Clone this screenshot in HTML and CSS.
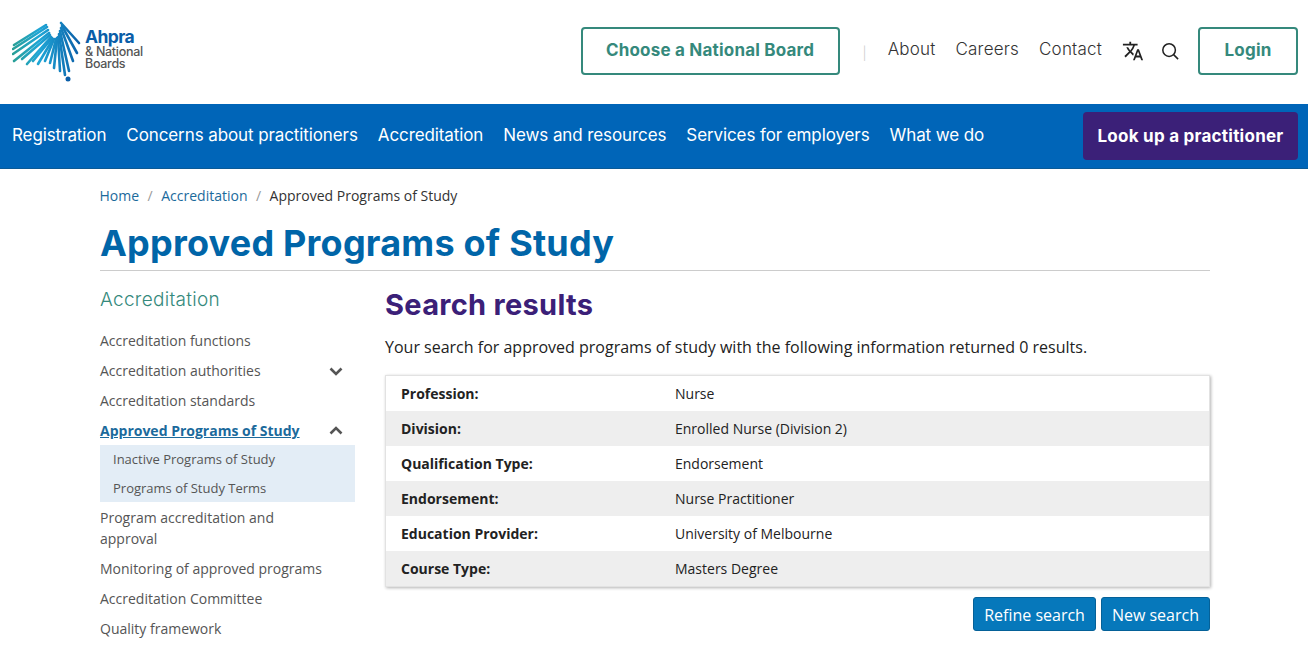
FILE: index.html
```html
<!DOCTYPE html>
<html lang="en">
<head>
    <meta charset="UTF-8">
    <meta name="viewport" content="width=device-width, initial-scale=1.0">
    <title>Approved Programs of Study</title>
    <link rel="stylesheet" href="styles.css">
</head>
<body>
    <header class="top">
        <a class="logo" href="#">
            <svg class="logo-mark" width="70" height="64" viewBox="12 20 70 64" fill="none" stroke-width="2.6" stroke-linecap="round">
                <defs>
                    <linearGradient id="fan" gradientUnits="userSpaceOnUse" x1="12" y1="0" x2="80" y2="0">
                        <stop offset="0" stop-color="#2a9f94"/>
                        <stop offset="0.4" stop-color="#1fa6d6"/>
                        <stop offset="1" stop-color="#0a5ea8"/>
                    </linearGradient>
                </defs>
                <g stroke="url(#fan)">
                    <path d="M14 44 L46 24"/>
                    <path d="M13 48 L47 26"/>
                    <path d="M13 53 L48 29"/>
                    <path d="M14 60 L49 32"/>
                    <path d="M22 58 L50 34"/>
                    <path d="M27 63 L51 36"/>
                    <path d="M33 60 L52 37"/>
                    <path d="M38 63 L53 38"/>
                    <path d="M45 60 L54 38"/>
                    <path d="M50 62 L56 38"/>
                    <path d="M54 67 L57 37"/>
                    <path d="M60 70 L58 36"/>
                    <path d="M65 74 L59 33"/>
                    <path d="M69 70 L60 30"/>
                    <path d="M73 60 L61 27"/>
                    <path d="M77 52 L62 25"/>
                    <path d="M79 42 L61 22"/>
                </g>
                <circle cx="68" cy="78" r="2.5" fill="#0a5ea8"/>
            </svg>
            <span class="logo-text">
                <strong>Ahpra</strong>
                <span>&amp; National</span>
                <span>Boards</span>
            </span>
        </a>
        <div class="top-links">
            <a class="btn-outline board" href="#">Choose a National Board</a>
            <span class="sep">|</span>
            <a class="plain" href="#">About</a>
            <a class="plain" href="#">Careers</a>
            <a class="plain" href="#">Contact</a>
            <svg class="translate" width="22" height="22" viewBox="0 0 24 24" fill="#222"><path d="M12.87 15.07l-2.54-2.51.03-.03A17.52 17.52 0 0 0 14.07 6H17V4h-7V2H8v2H1v2h11.17C11.5 7.92 10.44 9.75 9 11.35 8.07 10.32 7.3 9.19 6.69 8h-2c.73 1.63 1.73 3.17 2.98 4.56l-5.09 5.02L4 19l5-5 3.11 3.11.76-2.04zM18.5 10h-2L12 22h2l1.12-3h4.75L21 22h2l-4.5-12zm-2.62 7l1.62-4.33L19.12 17h-3.24z"/></svg>
            <svg class="search" width="18" height="18" viewBox="0 0 20 20" fill="none" stroke="#222" stroke-width="1.7"><circle cx="9" cy="9" r="7"/><path d="M14 14 L19 19"/></svg>
            <a class="btn-outline login" href="#">Login</a>
        </div>
    </header>

    <nav class="mainnav">
        <a href="#">Registration</a>
        <a href="#">Concerns about practitioners</a>
        <a href="#">Accreditation</a>
        <a href="#">News and resources</a>
        <a href="#">Services for employers</a>
        <a href="#">What we do</a>
        <a class="lookup" href="#">Look up a practitioner</a>
    </nav>

    <main class="page">
        <div class="crumbs">
            <a href="#">Home</a><span>/</span><a href="#">Accreditation</a><span>/</span>Approved Programs of Study
        </div>
        <h1>Approved Programs of Study</h1>

        <div class="columns">
            <aside class="side">
                <h3>Accreditation</h3>
                <ul>
                    <li><a href="#">Accreditation functions</a></li>
                    <li class="has-sub">
                        <a href="#">Accreditation authorities</a>
                        <svg width="14" height="9" viewBox="0 0 14 9" fill="none" stroke="#555" stroke-width="2.6"><path d="M1.5 1.5 L7 7 L12.5 1.5"/></svg>
                    </li>
                    <li><a href="#">Accreditation standards</a></li>
                    <li class="has-sub current">
                        <a href="#">Approved Programs of Study</a>
                        <svg width="14" height="9" viewBox="0 0 14 9" fill="none" stroke="#555" stroke-width="2.6"><path d="M1.5 7.5 L7 2 L12.5 7.5"/></svg>
                    </li>
                    <li class="subs">
                        <a href="#">Inactive Programs of Study</a>
                        <a href="#">Programs of Study Terms</a>
                    </li>
                    <li class="wrap"><a href="#">Program accreditation and approval</a></li>
                    <li><a href="#">Monitoring of approved programs</a></li>
                    <li><a href="#">Accreditation Committee</a></li>
                    <li><a href="#">Quality framework</a></li>
                </ul>
            </aside>

            <section class="results">
                <h2>Search results</h2>
                <p>Your search for approved programs of study with the following information returned 0 results.</p>
                <div class="summary">
                    <div class="row"><b>Profession:</b><span>Nurse</span></div>
                    <div class="row"><b>Division:</b><span>Enrolled Nurse (Division 2)</span></div>
                    <div class="row"><b>Qualification Type:</b><span>Endorsement</span></div>
                    <div class="row"><b>Endorsement:</b><span>Nurse Practitioner</span></div>
                    <div class="row"><b>Education Provider:</b><span>University of Melbourne</span></div>
                    <div class="row"><b>Course Type:</b><span>Masters Degree</span></div>
                </div>
                <div class="actions">
                    <a class="btn" href="#">Refine search</a>
                    <a class="btn" href="#">New search</a>
                </div>
            </section>
        </div>
    </main>
</body>
</html>
```

FILE: styles.css
```css
* {
    box-sizing: border-box;
}

html, body {
    height: 646px;
    overflow: hidden;
}

body {
    margin: 0;
    background: #fff;
    color: #222;
    font-family: "Open Sans", "Liberation Sans", sans-serif;
    font-size: 16px;
}

a {
    text-decoration: none;
    color: inherit;
}

/* top bar */
.top {
    height: 104px;
    padding: 0 10px 0 12px;
    display: flex;
    align-items: center;
    justify-content: space-between;
}

.logo {
    display: flex;
    margin-top: 1px;
}

.logo-text {
    display: flex;
    flex-direction: column;
    margin: 7px 0 0 3px;
    color: #555;
    font-family: Inter, sans-serif;
    font-size: 12.5px;
    font-weight: 500;
    line-height: 12px;
    letter-spacing: -0.3px;
}

.logo-text strong {
    color: #0a5ea8;
    font-size: 17.5px;
    font-weight: 700;
    line-height: 18px;
    letter-spacing: -0.6px;
}

.top-links {
    display: flex;
    align-items: center;
    font-family: Inter, sans-serif;
    font-size: 17px;
    font-weight: 300;
    color: #333;
    margin-top: -3px;
}

.top-links a {
    margin-right: 20px;
    padding-bottom: 4px;
}

.top-links .plain {
    letter-spacing: 0.2px;
}

.btn-outline {
    height: 48px;
    display: flex;
    align-items: center;
    justify-content: center;
    border: 2px solid #35897c;
    border-radius: 4px;
    color: #35897c;
    font-weight: 700;
    font-size: 17px;
    letter-spacing: 0.2px;
}

.top-links .board {
    width: 259px;
    margin-right: 23px;
    padding-bottom: 2px;
}

.top-links .login {
    width: 100px;
    margin: 0;
    padding-bottom: 2px;
}

.sep {
    color: #ccc;
    font-size: 13px;
    margin: 4px 21px 0 0;
}

.translate {
    margin-right: 17px;
}

.search {
    margin-right: 19px;
}

/* blue nav */
.mainnav {
    height: 65px;
    background: #0065b8;
    border-bottom: 1px solid #0b5a96;
    display: flex;
    align-items: center;
    gap: 20px;
    padding: 0 10px 0 12px;
    color: #fff;
    font-family: Inter, sans-serif;
    font-size: 17px;
    font-weight: 400;
    letter-spacing: -0.1px;
}

.mainnav a {
    padding-bottom: 2px;
}

.mainnav .lookup {
    margin-left: auto;
    width: 215px;
    height: 48px;
    display: flex;
    align-items: center;
    justify-content: center;
    background: #3b2078;
    border-radius: 4px;
    font-weight: 700;
    letter-spacing: 0.25px;
    padding: 0;
}

/* page */
.page {
    width: 1110px;
    margin-left: 100px;
}

.crumbs {
    padding-top: 16px;
    margin-left: -0.5px;
    font-size: 14px;
    line-height: 22px;
    color: #333;
}

.crumbs a {
    color: #1b6a9c;
}

.crumbs span {
    color: #999;
    margin: 0 8.5px;
}

h1 {
    margin: 11px 0 0;
    height: 53px;
    line-height: 50px;
    font-family: Inter, sans-serif;
    font-size: 36px;
    font-weight: 700;
    letter-spacing: 0.22px;
    color: #0065a8;
    border-bottom: 1px solid #ccc;
}

.columns {
    display: flex;
}

.side {
    width: 255px;
    margin-right: 30px;
    flex-shrink: 0;
}

.side h3 {
    margin: 17px 0 0;
    font-family: Inter, sans-serif;
    font-size: 19px;
    line-height: 24px;
    font-weight: 300;
    letter-spacing: 0.3px;
    color: #35897c;
}

.side ul {
    list-style: none;
    margin: 14px 0 0;
    padding: 0;
    font-size: 14px;
    color: #555;
}

.side li {
    min-height: 30px;
    line-height: 30px;
}

.side li.has-sub {
    display: flex;
    align-items: center;
    justify-content: space-between;
    padding-right: 12px;
}

.side li.current {
    min-height: 29px;
    line-height: 29px;
}

.side li.current a {
    color: #1b6a9c;
    font-weight: 700;
    text-decoration: underline;
}

.side li.subs {
    background: #e3edf6;
    font-size: 13px;
    padding: 0 13px;
    line-height: 28.5px;
}

.side li.subs a {
    display: block;
}

.side li.wrap {
    line-height: 21px;
    padding: 5px 40px 5px 0;
}

.results {
    flex: 1;
}

.results h2 {
    margin: 15px 0 0;
    font-family: Inter, sans-serif;
    font-size: 29px;
    line-height: 38px;
    font-weight: 700;
    letter-spacing: 0.3px;
    color: #3b2078;
}

.results p {
    margin: 11px 0 0;
    line-height: 24px;
    font-size: 16px;
}

.summary {
    margin-top: 16px;
    border: 1px solid #e2e2e2;
    box-shadow: 1px 1px 3px rgba(0, 0, 0, 0.3);
    font-size: 14px;
}

.row {
    height: 35px;
    display: flex;
    align-items: center;
    padding-left: 15px;
}

.row:nth-child(even) {
    background: #eee;
}

.row b {
    width: 274px;
}

.actions {
    display: flex;
    justify-content: flex-end;
    gap: 5px;
    margin-top: 10px;
}

.btn {
    height: 34px;
    padding: 1px 10px 0;
    display: flex;
    align-items: center;
    background: #0678bb;
    border: 1px solid #056198;
    border-radius: 3px;
    color: #fff;
    font-size: 16px;
}
```
